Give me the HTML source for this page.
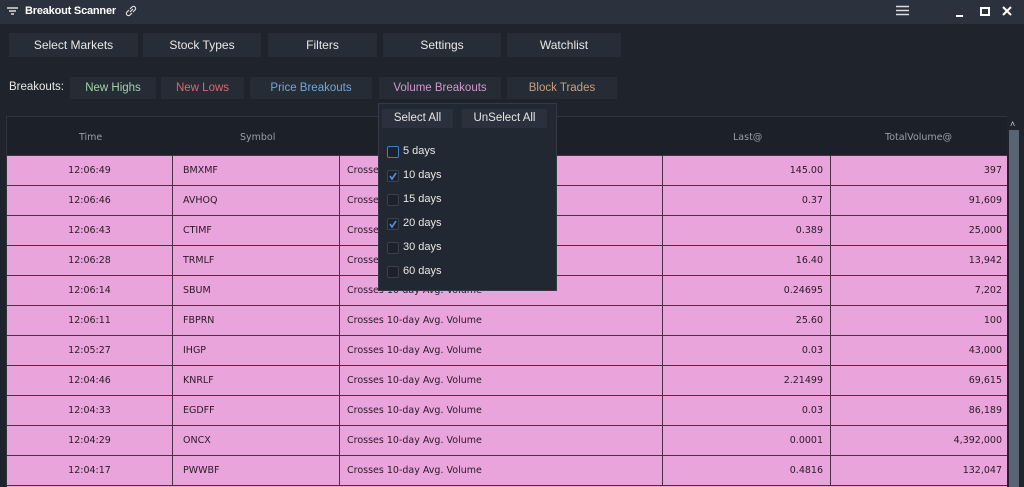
<!DOCTYPE html><html><head><style>
*{margin:0;padding:0;box-sizing:border-box}
html,body{width:1024px;height:487px;overflow:hidden}
body{background:#1f232c;font-family:"Liberation Sans",sans-serif;position:relative;color:#e6e6e6}
.tb{position:absolute;left:0;top:0;width:1024px;height:24px;background:#2b313d}
.abs{position:absolute}
.btn{position:absolute;background:#272d37;color:#e8e8e8;font-size:12px;text-align:center;top:33px;height:24px;line-height:24px}
.bb{position:absolute;background:#262c36;font-size:11.5px;text-align:center;top:77px;height:22px;line-height:22px}
.tbl{position:absolute;left:6px;top:116px;width:1001px;height:371px;background:#1c2029;border:1px solid #2e3440;border-right:none;border-bottom:none}
.hd{position:absolute;top:132px;font-size:9.5px;color:#9a9ea6;font-family:"DejaVu Sans",sans-serif}
#rows{position:absolute;left:0;top:0;width:1024px;height:487px;overflow:hidden}
.row{position:absolute;left:7px;width:1000px;height:30px;background:#eaa4dc;border-top:1px solid #4a2f45;font-family:"DejaVu Sans",sans-serif;font-size:9.5px;color:#2a1a28}
.row div{position:absolute;top:0;height:29px;line-height:29px;border-right:1px solid #4a2f45}
.dd{position:absolute;left:378px;top:103px;width:179px;height:188px;background:#222831;border:1px solid #333a46}
.cb{position:absolute;left:8px;width:12px;height:12px;border:1px solid #3a404c;border-radius:2px;background:#1d2129}
.lb{position:absolute;left:24px;font-size:11px;color:#e8e8e8}
</style></head><body>
<div class="tb"></div>
<svg class="abs" style="left:7px;top:6px" width="12" height="11"><path d="M0 2h11M2 5h7M4 8h3" stroke="#ddd" stroke-width="1.5"/></svg>
<div class="abs" style="left:25px;top:5px;font-size:11px;font-weight:bold;color:#fff;letter-spacing:-0.2px">Breakout Scanner</div>
<svg class="abs" style="left:124px;top:4px" width="14" height="14"><path d="M6 8l3-3M5 6l-2 2a2 2 0 0 0 3 3l2-2M9 8l2-2a2 2 0 0 0-3-3l-2 2" stroke="#ddd" fill="none" stroke-width="1.2"/></svg>
<svg class="abs" style="left:896px;top:5px" width="13" height="12"><path d="M0 1.5h13M0 5.5h13M0 9.5h13" stroke="#ddd" stroke-width="1.6"/></svg>
<svg class="abs" style="left:954px;top:5px" width="64" height="14"><path d="M2 11h7" stroke="#fff" stroke-width="2"/><rect x="27" y="3" width="8" height="7" fill="none" stroke="#fff" stroke-width="2"/><path d="M49 2l8 8M57 2l-8 8" stroke="#fff" stroke-width="2"/></svg>
<div class="btn" style="left:9px;width:129px">Select Markets</div>
<div class="btn" style="left:143px;width:118px">Stock Types</div>
<div class="btn" style="left:268px;width:109px">Filters</div>
<div class="btn" style="left:383px;width:118px">Settings</div>
<div class="btn" style="left:507px;width:114px">Watchlist</div>
<div class="abs" style="left:9px;top:81px;font-size:11.5px;color:#e8e8e8">Breakouts:</div>
<div class="bb" style="left:70px;width:86px;color:#9fd4a4">New Highs</div>
<div class="bb" style="left:161px;width:83px;color:#e06666">New Lows</div>
<div class="bb" style="left:250px;width:122px;color:#6fa8dc">Price Breakouts</div>
<div class="bb" style="left:379px;width:122px;color:#d596cc">Volume Breakouts</div>
<div class="bb" style="left:507px;width:110px;color:#c9a07a">Block Trades</div>
<div class="tbl"></div>
<div class="hd" style="left:79px">Time</div>
<div class="hd" style="left:240px">Symbol</div>
<div class="hd" style="left:733px">Last@</div>
<div class="hd" style="left:885px">TotalVolume@</div>
<div class="abs" style="left:1009px;top:130px;width:10px;height:357px;background:#5a6372"></div>
<div class="abs" style="left:1010px;top:119px;font-size:9px;color:#ccc">˄</div>
<div id="rows"></div>
<div class="dd">
<div class="abs" style="left:3px;top:5px;width:71px;height:19px;background:#2a313c;font-size:11.5px;line-height:19px;text-align:center">Select All</div>
<div class="abs" style="left:83px;top:5px;width:85px;height:19px;background:#2a313c;font-size:11.5px;line-height:19px;text-align:center">UnSelect All</div>
</div>
<script>
const d=[["12:06:49","BMXMF","145.00","397"],["12:06:46","AVHOQ","0.37","91,609"],["12:06:43","CTIMF","0.389","25,000"],["12:06:28","TRMLF","16.40","13,942"],["12:06:14","SBUM","0.24695","7,202"],["12:06:11","FBPRN","25.60","100"],["12:05:27","IHGP","0.03","43,000"],["12:04:46","KNRLF","2.21499","69,615"],["12:04:33","EGDFF","0.03","86,189"],["12:04:29","ONCX","0.0001","4,392,000"],["12:04:17","PWWBF","0.4816","132,047"]];
let h="";d.forEach((r,i)=>{h+=`<div class="row" style="top:${155+i*30}px"><div style="left:0;width:166px;text-align:center">${r[0]}</div><div style="left:166px;width:167px;padding-left:10px">${r[1]}</div><div style="left:333px;width:323px;padding-left:7px">Crosses 10-day Avg. Volume</div><div style="left:656px;width:168px;text-align:right;padding-right:7px">${r[2]}</div><div style="left:824px;width:176px;text-align:right;padding-right:5px;border-right:none">${r[3]}</div></div>`});
h+=`<div class="row" style="top:485px;height:2px"></div>`;
document.getElementById("rows").innerHTML=h;
const dd=document.querySelector(".dd");
["5 days","10 days","15 days","20 days","30 days","60 days"].forEach((t,i)=>{const y=42+i*24;const c=(i==1||i==3);
dd.innerHTML+=`<div class="cb" style="top:${y}px;${i==0?'border-color:#3f7fd0':''}">${c?'<svg width="10" height="10" style="position:absolute;left:0;top:0"><path d="M2 5l2 3 4-6" stroke="#4a90e2" stroke-width="1.6" fill="none"/></svg>':''}</div><div class="lb" style="top:${y-1}px">${t}</div>`});
</script>
</body></html>
